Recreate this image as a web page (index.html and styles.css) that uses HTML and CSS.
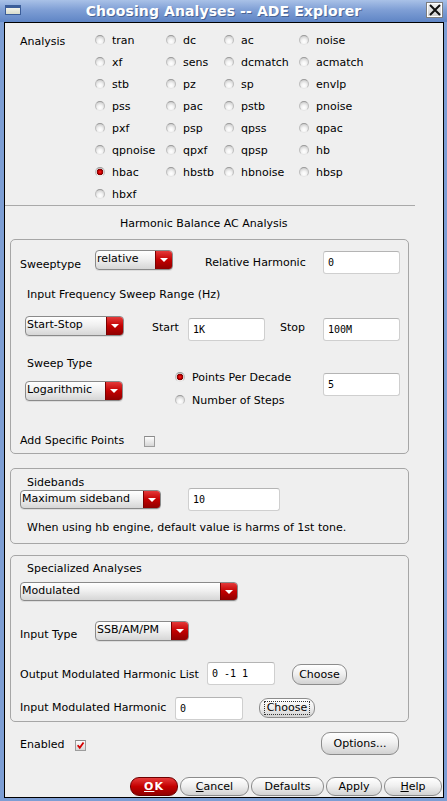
FILE: index.html
```html
<!DOCTYPE html>
<html>
<head>
<meta charset="utf-8">
<link rel="stylesheet" href="styles.css">
</head>
<body>
<div class="window">
  <div class="titlebar">
    <span class="winicon"></span>
    <span class="title">Choosing Analyses -- ADE Explorer</span>
    <span class="close"><svg width="14" height="14" viewBox="0 0 14 14"><path d="M2 2 L12 12 M12 2 L2 12" stroke="#111" stroke-width="2" fill="none"/></svg></span>
  </div>
  <div class="frame">
    <div class="client">
      <div class="analysis">
        <div class="analysis-label">Analysis</div>
        <div class="agrid">
          <div class="opt"><span class="radio"></span>tran</div>
          <div class="opt"><span class="radio"></span>dc</div>
          <div class="opt"><span class="radio"></span>ac</div>
          <div class="opt"><span class="radio"></span>noise</div>
          <div class="opt"><span class="radio"></span>xf</div>
          <div class="opt"><span class="radio"></span>sens</div>
          <div class="opt"><span class="radio"></span>dcmatch</div>
          <div class="opt"><span class="radio"></span>acmatch</div>
          <div class="opt"><span class="radio"></span>stb</div>
          <div class="opt"><span class="radio"></span>pz</div>
          <div class="opt"><span class="radio"></span>sp</div>
          <div class="opt"><span class="radio"></span>envlp</div>
          <div class="opt"><span class="radio"></span>pss</div>
          <div class="opt"><span class="radio"></span>pac</div>
          <div class="opt"><span class="radio"></span>pstb</div>
          <div class="opt"><span class="radio"></span>pnoise</div>
          <div class="opt"><span class="radio"></span>pxf</div>
          <div class="opt"><span class="radio"></span>psp</div>
          <div class="opt"><span class="radio"></span>qpss</div>
          <div class="opt"><span class="radio"></span>qpac</div>
          <div class="opt"><span class="radio"></span>qpnoise</div>
          <div class="opt"><span class="radio"></span>qpxf</div>
          <div class="opt"><span class="radio"></span>qpsp</div>
          <div class="opt"><span class="radio"></span>hb</div>
          <div class="opt"><span class="radio on"></span>hbac</div>
          <div class="opt"><span class="radio"></span>hbstb</div>
          <div class="opt"><span class="radio"></span>hbnoise</div>
          <div class="opt"><span class="radio"></span>hbsp</div>
          <div class="opt"><span class="radio"></span>hbxf</div>
        </div>
      </div>
      <div class="sep"></div>
      <div class="heading">Harmonic Balance AC Analysis</div>

      <div class="group g1">
        <div class="row rowA">
          <div class="lbl lbl-sweeptype">Sweeptype</div>
          <div class="dd dd-relative"><span class="dd-text">relative</span><span class="dd-btn"></span></div>
          <div class="lbl lbl-relharm">Relative Harmonic</div>
          <div class="inp inp-77 inp-relharm">0</div>
        </div>
        <div class="lbl rowB">Input Frequency Sweep Range (Hz)</div>
        <div class="row rowC">
          <div class="dd dd-startstop"><span class="dd-text">Start-Stop</span><span class="dd-btn"></span></div>
          <div class="lbl lbl-start">Start</div>
          <div class="inp inp-77 inp-c">1K</div>
          <div class="lbl lbl-stop">Stop</div>
          <div class="inp inp-77 inp-c">100M</div>
        </div>
        <div class="lbl rowD">Sweep Type</div>
        <div class="row rowE">
          <div class="dd dd-log"><span class="dd-text">Logarithmic</span><span class="dd-btn"></span></div>
          <div class="radcol">
            <div class="radline"><span class="radio on"></span>Points Per Decade</div>
            <div class="radline radline2"><span class="radio"></span>Number of Steps</div>
          </div>
          <div class="inp inp-77 inp-e">5</div>
        </div>
        <div class="row rowF">
          <div class="lbl lbl-addpts">Add Specific Points</div>
          <span class="check check-f"></span>
        </div>
      </div>

      <div class="group g2">
        <div class="lbl lbl-sidebands">Sidebands</div>
        <div class="row rowS">
          <div class="dd dd-side"><span class="dd-text">Maximum sideband</span><span class="dd-btn"></span></div>
          <div class="inp inp-side">10</div>
        </div>
        <div class="lbl note">When using hb engine, default value is harms of 1st tone.</div>
      </div>

      <div class="group g3">
        <div class="lbl lbl-spec">Specialized Analyses</div>
        <div class="dd dd-mod"><span class="dd-text">Modulated</span><span class="dd-btn"></span></div>
        <div class="row rowIT">
          <div class="lbl lbl-inputtype">Input Type</div>
          <div class="dd dd-ssb"><span class="dd-text">SSB/AM/PM</span><span class="dd-btn"></span></div>
        </div>
        <div class="row rowOut">
          <div class="lbl lbl-out">Output Modulated Harmonic List</div>
          <div class="inp inp-68">0 -1 1</div>
          <div class="btn btn-choose1">Choose</div>
        </div>
        <div class="row rowIn">
          <div class="lbl lbl-in">Input Modulated Harmonic</div>
          <div class="inp inp-68">0</div>
          <div class="btn btn-choose2"><span class="focus">Choose</span></div>
        </div>
      </div>

      <div class="row rowEn">
        <div class="lbl lbl-enabled">Enabled</div>
        <span class="check on check-en"><svg width="11" height="11" viewBox="0 0 11 11"><path d="M2 5.2 L4.6 8.2 L9.2 1.8" stroke="#d40000" stroke-width="2.2" fill="none"/></svg></span>
        <div class="btn btn-options">Options...</div>
      </div>

      <div class="row bottom">
        <div class="btn bb btn-ok"><u>O</u>K</div>
        <div class="btn bb btn-cancel"><u>C</u>ancel</div>
        <div class="btn bb btn-defaults">Defaults</div>
        <div class="btn bb btn-apply">Apply</div>
        <div class="btn bb btn-help"><u>H</u>elp</div>
      </div>
    </div>
  </div>
</div>
</body>
</html>
```

FILE: styles.css
```css
* { box-sizing: border-box; }
html, body { margin: 0; padding: 0; }
body {
  width: 447px; height: 801px; overflow: hidden;
  font-family: "DejaVu Sans", "Liberation Sans", sans-serif;
  font-size: 11px; color: #000;
  background: #7d9ed4;
}
.window { width: 447px; height: 801px; display: flex; flex-direction: column; }

/* title bar */
.titlebar {
  height: 22px; display: flex; align-items: center;
  padding: 0 4px 0 5px;
  background: linear-gradient(#a9c1e7, #7f9fd5 45%, #5f85c5);
}
.winicon {
  width: 16px; height: 10px; margin-top: -3px;
  border: 1px solid #3b5d99; border-top-width: 3px;
  background: linear-gradient(#f2f2ea, #d8dccb);
}
.title {
  flex: 1; text-align: center;
  font-weight: bold; font-size: 14px; color: #fff;
  text-shadow: 1px 1px 0 rgba(40, 60, 100, 0.55);
  letter-spacing: 0.1px;
}
.close {
  width: 17px; height: 16px; margin-top: -2px;
  display: flex; align-items: center; justify-content: center;
  background: linear-gradient(#f2f2f2, #cfcfcf);
  border: 1px solid #7d7d7d; box-shadow: inset 0 0 0 1px #fff;
}

.frame { flex: 1; display: flex; padding: 0 3px 3px 4px; background: #7d9ed4; }
.client {
  flex: 1; display: flex; flex-direction: column;
  background: #efefef; border: 1px solid #000;
  padding-top: 6px;
}

/* analysis radios */
.analysis { display: flex; padding-left: 15px; }
.analysis-label { width: 75px; line-height: 22px; margin-top: 2px; }
.agrid { display: grid; grid-template-columns: 71px 58px 75px 90px; grid-auto-rows: 22px; }
.opt { display: flex; align-items: center; gap: 7px; white-space: nowrap; }

.radio {
  flex: none; width: 10px; height: 10px; border-radius: 50%;
  border: 1px solid; border-color: #9a9a9a #bdbdbd #e6e6e6 #bdbdbd;
  background: radial-gradient(circle at 50% 70%, #ffffff 0, #f4f4f4 35%, #cfcfcf 80%);
}
.radio.on {
  background:
    radial-gradient(circle at 50% 50%, #ff2020 0, #d00000 1.5px, #7a0000 3px, rgba(0,0,0,0) 3.6px),
    radial-gradient(circle at 50% 70%, #ffffff 0, #f4f4f4 35%, #cfcfcf 80%);
}

.sep { height: 1px; width: 410px; background: #a9a9a9; }
.heading { margin-top: 11px; line-height: 14px; padding-left: 115px; }

/* generic */
.row { display: flex; align-items: flex-start; }
.lbl { line-height: 14px; white-space: nowrap; }

.dd {
  flex: none; display: flex; height: 20px;
  border: 1px solid #8a8a8a; border-radius: 4px; overflow: hidden;
  background: linear-gradient(#ffffff, #f0f0f0 45%, #d6d6d6);
  box-shadow: 0 1px 0 rgba(0,0,0,0.08);
}
.dd-text { flex: 1; padding-left: 1px; line-height: 16px; white-space: nowrap; }
.dd-btn {
  width: 17px; display: flex; align-items: center; justify-content: center;
  background: linear-gradient(#e43a3a, #c20000 50%, #8e0000);
  border-left: 1px solid #7a0000;
}
.dd-btn::after {
  content: ""; width: 0; height: 0;
  border-left: 4px solid transparent; border-right: 4px solid transparent;
  border-top: 4px solid #fff;
}

.inp {
  flex: none; height: 23px; background: #fff;
  border: 1px solid #cfcfcf; border-top-color: #b4b4b4; border-radius: 3px;
  font-family: "DejaVu Sans Mono", "Liberation Mono", monospace; font-size: 10px;
  padding-left: 4px; line-height: 21px; white-space: pre;
}
.inp-77 { width: 77px; }
.inp-68 { width: 68px; }

.btn {
  flex: none; display: flex; align-items: center; justify-content: center;
  border: 1px solid #8c8c8c; border-radius: 9px;
  background: linear-gradient(#ffffff, #f0f0f0 45%, #d2d2d2);
  white-space: nowrap;
}

.check {
  flex: none; width: 11px; height: 11px; display: flex; align-items: center; justify-content: center;
  border: 1px solid #9c9c9c; border-top-color: #8a8a8a;
  background: linear-gradient(#fdfdfd, #d6d6d6);
}

/* groups */
.group { margin-left: 5px; width: 399px; border: 1px solid #a6a6a6; border-radius: 5px; }
.g1 { margin-top: 8px; padding: 10px 0 5px 0; }
.g2 { margin-top: 14px; padding: 9px 0 8px 0; }
.g3 { margin-top: 11px; padding: 6px 0 1px 0; }

/* group 1 */
.rowA { height: 24px; padding-left: 9px; }
.lbl-sweeptype { width: 75px; margin-top: 8px; }
.dd-relative { width: 78px; }
.lbl-relharm { width: 118px; margin-left: 32px; margin-top: 6px; }
.inp-relharm { margin-top: 1px; }

.rowB { margin-top: 14px; padding-left: 16px; }

.rowC { margin-top: 14px; height: 25px; padding-left: 14px; }
.dd-startstop { width: 99px; }
.lbl-start { width: 36px; margin-left: 28px; margin-top: 5px; }
.lbl-stop { width: 43px; margin-left: 15px; margin-top: 5px; }
.inp-c { margin-top: 2px; }

.rowD { margin-top: 17px; line-height: 12px; padding-left: 16px; }

.rowE { height: 37px; padding-left: 14px; }
.dd-log { width: 98px; margin-top: 11px; }
.radcol { width: 148px; margin-left: 52px; display: flex; flex-direction: column; }
.radline { height: 14px; display: flex; align-items: center; gap: 7px; white-space: nowrap; }
.radline2 { margin-top: 9px; }
.inp-e { margin-top: 3px; }

.rowF { margin-top: 27px; height: 14px; padding-left: 9px; }
.lbl-addpts { width: 124px; }
.check-f { margin-top: 2px; }

/* group 2 */
.lbl-sidebands { line-height: 10px; padding-left: 16px; }
.rowS { height: 23px; padding-left: 9px; }
.dd-side { width: 141px; height: 19px; margin-top: 2px; }
.inp-side { width: 92px; margin-left: 27px; }
.note { margin-top: 10px; padding-left: 16px; }

/* group 3 */
.lbl-spec { padding-left: 16px; }
.dd-mod { width: 218px; height: 19px; margin-top: 6px; margin-left: 9px; }
.rowIT { margin-top: 20px; height: 20px; padding-left: 9px; }
.lbl-inputtype { width: 75px; margin-top: 7px; }
.dd-ssb { width: 94px; }
.rowOut { margin-top: 21px; height: 23px; padding-left: 9px; }
.lbl-out { width: 187px; margin-top: 6px; }
.btn-choose1 { width: 55px; height: 21px; margin-left: 17px; margin-top: 2px; }
.rowIn { margin-top: 12px; height: 23px; padding-left: 9px; }
.lbl-in { width: 155px; margin-top: 4px; }
.btn-choose2 { width: 56px; height: 20px; margin-left: 16px; margin-top: 1px; }
.focus { border: 1px dotted #333; padding: 0 2px; line-height: 12px; }

/* enabled */
.rowEn { margin-top: 10px; height: 23px; padding-left: 15px; }
.lbl-enabled { width: 55px; margin-top: 6px; }
.check-en { margin-top: 8px; }
.btn-options { width: 78px; height: 23px; margin-left: 235px; }

/* bottom buttons */
.bottom { margin-top: 22px; height: 19px; justify-content: flex-end; gap: 2px; padding-right: 1px; }
.bb { height: 19px; }
.btn-ok {
  width: 48px; color: #fff; font-weight: bold; letter-spacing: 1px;
  border-color: #6e0000;
  background: linear-gradient(#e53b3b, #c40000 50%, #900000);
}
.btn-cancel { width: 69px; }
.btn-defaults { width: 73px; }
.btn-apply { width: 56px; }
.btn-help { width: 58px; }
```
